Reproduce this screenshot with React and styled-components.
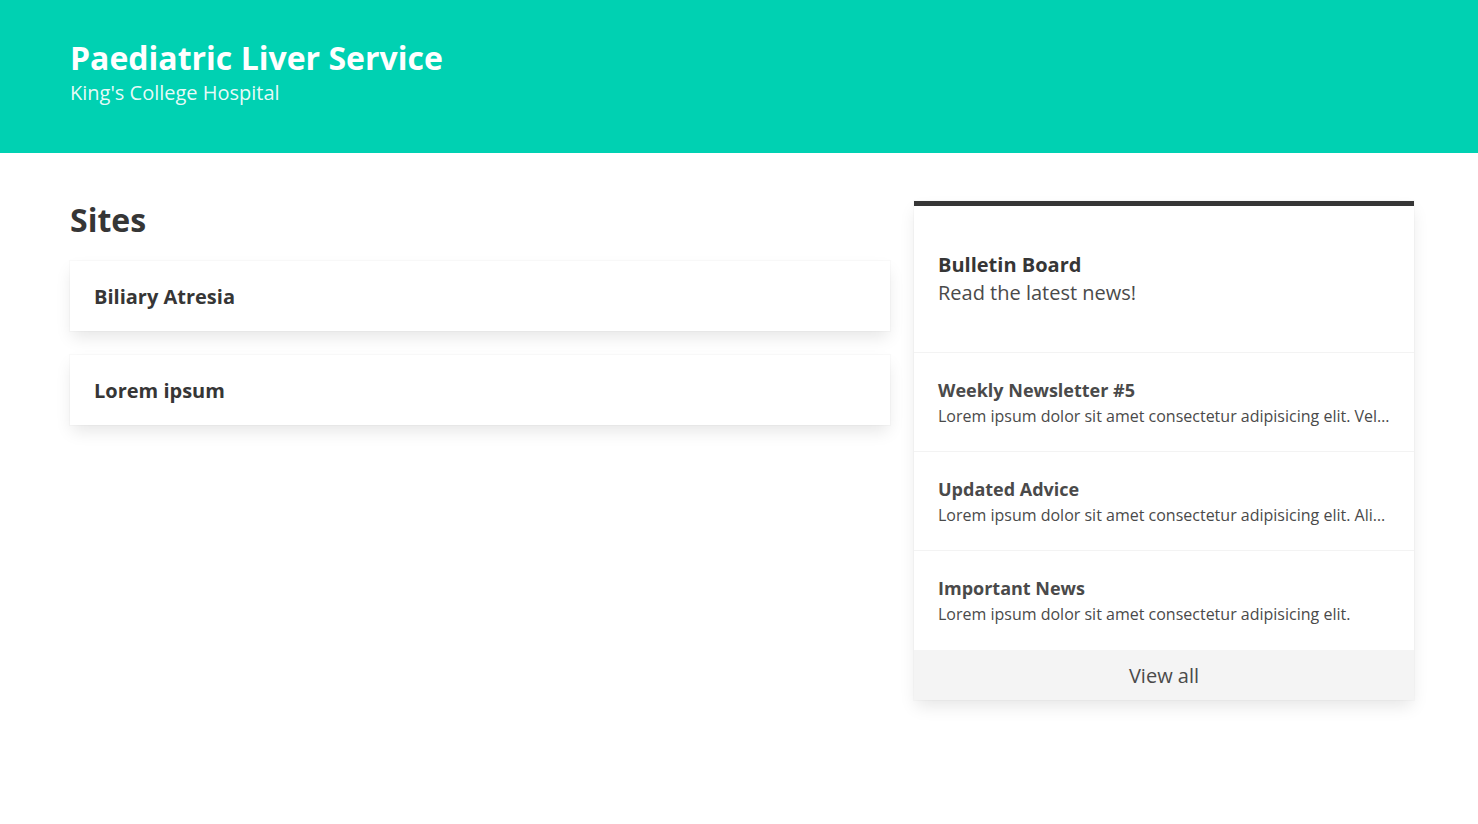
import styled, { createGlobalStyle } from 'styled-components'

// Page wide reset and font
const GlobalStyle = createGlobalStyle`
  * { box-sizing: border-box; }
  body {
    margin: 0;
    background: #fff;
    font-family: "Open Sans", "Noto Sans", sans-serif;
    color: #363636;
  }
`

const Hero = styled.header`
  /* Green banner with the service name */
  background: #00d1b2;
  height: 153px;
  padding: 39px 70px 0;
`

const HeroTitle = styled.h1`
  margin: 0;
  font-size: 32px;
  line-height: 38px;
  font-weight: 700;
  color: #fff;
`

const HeroSubtitle = styled.h2`
  margin: 2px 0 0;
  font-size: 20px;
  line-height: 28px;
  font-weight: 400;
  color: rgba(255, 255, 255, 0.92);
`

const Main = styled.main`
  display: grid;
  grid-template-columns: 820px 500px;
  gap: 24px;
  padding: 48px 64px 48px 70px;
  align-items: start;
`

const Column = styled.section`
  display: flex;
  flex-direction: column;
  gap: 24px;
`

const SectionTitle = styled.h2`
  margin: 0 0 -1px;
  padding-top: 1px;
  font-size: 32px;
  line-height: 36px;
  font-weight: 700;
  color: #363636;
`

const shadow = `
  box-shadow: 0 8px 16px -2px rgba(10, 10, 10, 0.1), 0 0 0 1px rgba(10, 10, 10, 0.02);
`

const SiteCard = styled.a`
  /* One clickable site */
  display: flex;
  align-items: center;
  height: 70px;
  padding: 0 24px;
  background: #fff;
  ${shadow}
  font-size: 20px;
  font-weight: 700;
  color: #363636;
  text-decoration: none;
`

const Board = styled.aside`
  background: #fff;
  border-top: 5px solid #363636;
  ${shadow}
`

const BoardHead = styled.div`
  padding: 46px 24px 47px;
  border-bottom: 1px solid #f3f3f3;
`

const BoardTitle = styled.h3`
  margin: 0;
  font-size: 20px;
  line-height: 25px;
  font-weight: 700;
  color: #363636;
`

const BoardSubtitle = styled.p`
  margin: 3px 0 0;
  font-size: 20px;
  line-height: 25px;
  font-weight: 400;
  color: #4a4a4a;
`

const NewsItem = styled.div`
  /* A single bulletin entry */
  height: 99px;
  padding: 24px 24px 0;
  border-bottom: ${(p) => (p.$last ? 'none' : '1px solid #f3f3f3')};
`

const NewsTitle = styled.h4`
  margin: 0;
  font-size: 18px;
  line-height: 27px;
  font-weight: 700;
  color: #4a4a4a;
`

const NewsText = styled.p`
  margin: 0;
  font-size: 16px;
  line-height: 24px;
  color: #4a4a4a;
  white-space: nowrap;
  overflow: hidden;
  text-overflow: ellipsis;
`

const ViewAll = styled.a`
  display: flex;
  align-items: center;
  justify-content: center;
  height: 50px;
  background: #f4f4f4;
  font-size: 20px;
  color: #4a4a4a;
  text-decoration: none;
`

const sites = ['Biliary Atresia', 'Lorem ipsum']

const news = [
  {
    title: 'Weekly Newsletter #5',
    text: 'Lorem ipsum dolor sit amet consectetur adipisicing elit. Velit, quisquam nemo.',
  },
  {
    title: 'Updated Advice',
    text: 'Lorem ipsum dolor sit amet consectetur adipisicing elit. Aliquam, dolorum natus.',
  },
  {
    title: 'Important News',
    text: 'Lorem ipsum dolor sit amet consectetur adipisicing elit.',
  },
]

function App() {
  return (
    <>
      <GlobalStyle />
      <Hero>
        <HeroTitle>Paediatric Liver Service</HeroTitle>
        <HeroSubtitle>King's College Hospital</HeroSubtitle>
      </Hero>
      <Main>
        <Column>
          <SectionTitle>Sites</SectionTitle>
          {sites.map((s) => (
            <SiteCard key={s} href="#">{s}</SiteCard>
          ))}
        </Column>
        <Board>
          <BoardHead>
            <BoardTitle>Bulletin Board</BoardTitle>
            <BoardSubtitle>Read the latest news!</BoardSubtitle>
          </BoardHead>
          {news.map((n, i) => (
            <NewsItem key={n.title} $last={i === news.length - 1}>
              <NewsTitle>{n.title}</NewsTitle>
              <NewsText>{n.text}</NewsText>
            </NewsItem>
          ))}
          <ViewAll href="#">View all</ViewAll>
        </Board>
      </Main>
    </>
  )
}

export default App
